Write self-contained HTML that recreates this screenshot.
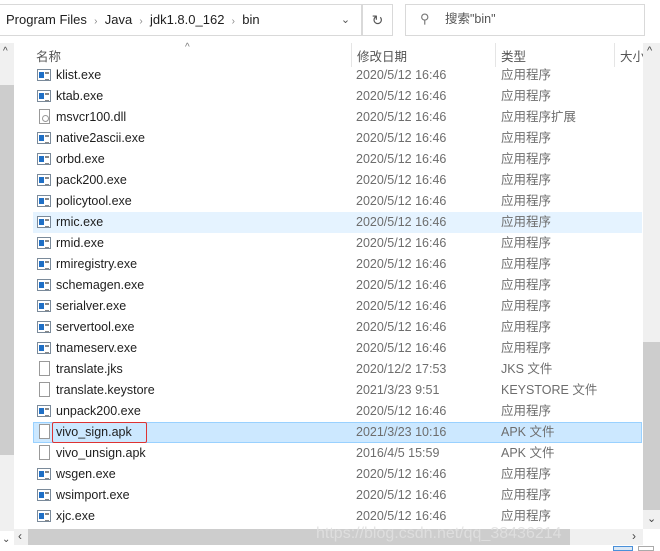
<!DOCTYPE html>
<html><head><meta charset="utf-8"><style>
*{margin:0;padding:0;box-sizing:border-box}
body{width:660px;height:551px;background:#fff;position:relative;overflow:hidden;font-family:"Liberation Sans","Noto Sans CJK SC",sans-serif;font-size:12.5px;line-height:15px;color:#1e1e1e}
.a{position:absolute}
.row{position:absolute;left:33px;width:609px;height:21px}
.row span{position:absolute;top:3px;white-space:nowrap;line-height:15px;height:15px}
.n{left:23px}.d{left:323px;color:#6d6d6d}.t{left:468px;color:#6d6d6d}
.ic{position:absolute;left:4px;top:4px;width:14px;height:12px;border:1px solid #7a8a9a;background:#fff}
.ic:before{content:"";position:absolute;left:1px;top:2px;width:5px;height:6px;background:#1f6fc5}
.ic:after{content:"";position:absolute;left:7px;top:2px;width:4px;height:6px;border-top:1px solid #888;border-bottom:1px solid #888;box-shadow:inset 0 2px 0 -1px #888}
.fi{position:absolute;left:6px;top:2px;width:11px;height:15px;border:1px solid #999;background:#fff}
.dll{position:absolute;left:6px;top:2px;width:11px;height:15px;border:1px solid #999;background:#fff}
.dll:after{content:"";position:absolute;left:2px;top:5px;width:5px;height:5px;border:1px solid #999;border-radius:50%}
</style></head><body>
<div class="a" style="left:0;top:4px;width:362px;height:32px;border-top:1px solid #d9d9d9;border-bottom:1px solid #d9d9d9"></div>
<div class="a" style="left:6px;top:12px;font-size:13px">Program Files&nbsp;&nbsp;<span style="color:#888;font-size:10px">›</span>&nbsp;&nbsp;Java&nbsp;&nbsp;<span style="color:#888;font-size:10px">›</span>&nbsp;&nbsp;jdk1.8.0_162&nbsp;&nbsp;<span style="color:#888;font-size:10px">›</span>&nbsp;&nbsp;bin</div>
<div class="a" style="left:330px;top:4px;width:32px;height:32px;border:1px solid #d9d9d9;border-left:none;text-align:center;line-height:30px;color:#555;font-size:11px">⌄</div>
<div class="a" style="left:362px;top:4px;width:31px;height:32px;border:1px solid #d9d9d9;text-align:center;line-height:30px;color:#555;font-size:14px">↻</div>
<div class="a" style="left:405px;top:4px;width:240px;height:32px;border:1px solid #d9d9d9"></div>
<div class="a" style="left:420px;top:11px;color:#777;font-size:13px">⚲</div>
<div class="a" style="left:445px;top:12px;color:#555;font-size:12.5px">搜索"bin"</div>
<div class="a" style="left:0;top:43px;width:14px;height:488px;background:#f0f0f0"></div>
<div class="a" style="left:3px;top:44px;font-size:10px;color:#444">^</div>
<div class="a" style="left:0;top:85px;width:14px;height:370px;background:#cdcdcd"></div>
<div class="a" style="left:2px;top:532px;font-size:10px;color:#444">⌄</div>
<div class="a" style="left:185px;top:40px;font-size:10px;color:#777">^</div>
<div class="a" style="left:36px;top:50px;color:#555">名称</div>
<div class="a" style="left:351px;top:43px;width:1px;height:24px;background:#e5e5e5"></div>
<div class="a" style="left:357px;top:50px;color:#555">修改日期</div>
<div class="a" style="left:495px;top:43px;width:1px;height:24px;background:#e5e5e5"></div>
<div class="a" style="left:501px;top:50px;color:#555">类型</div>
<div class="a" style="left:614px;top:43px;width:1px;height:24px;background:#e5e5e5"></div>
<div class="a" style="left:620px;top:50px;color:#555">大小</div>
<div class="a" style="left:643px;top:43px;width:17px;height:486px;background:#f0f0f0"></div>
<div class="a" style="left:647px;top:44px;font-size:11px;color:#444">^</div>
<div class="a" style="left:643px;top:342px;width:17px;height:168px;background:#cdcdcd"></div>
<div class="a" style="left:647px;top:512px;font-size:11px;color:#444">⌄</div>
<div class="a" style="left:33px;top:212px;width:609px;height:21px;background:#e5f3ff"></div>
<div class="a" style="left:33px;top:422px;width:609px;height:21px;background:#cce8ff;border:1px solid #99d1ff"></div>
<div class="a" style="left:52px;top:422px;width:95px;height:21px;border:1px solid #d33;border-radius:2px"></div>
<div class="row" style="top:65px"><i class="ic"></i><span class="n">klist.exe</span><span class="d">2020/5/12 16:46</span><span class="t">应用程序</span></div>
<div class="row" style="top:86px"><i class="ic"></i><span class="n">ktab.exe</span><span class="d">2020/5/12 16:46</span><span class="t">应用程序</span></div>
<div class="row" style="top:107px"><i class="dll"></i><span class="n">msvcr100.dll</span><span class="d">2020/5/12 16:46</span><span class="t">应用程序扩展</span></div>
<div class="row" style="top:128px"><i class="ic"></i><span class="n">native2ascii.exe</span><span class="d">2020/5/12 16:46</span><span class="t">应用程序</span></div>
<div class="row" style="top:149px"><i class="ic"></i><span class="n">orbd.exe</span><span class="d">2020/5/12 16:46</span><span class="t">应用程序</span></div>
<div class="row" style="top:170px"><i class="ic"></i><span class="n">pack200.exe</span><span class="d">2020/5/12 16:46</span><span class="t">应用程序</span></div>
<div class="row" style="top:191px"><i class="ic"></i><span class="n">policytool.exe</span><span class="d">2020/5/12 16:46</span><span class="t">应用程序</span></div>
<div class="row" style="top:212px"><i class="ic"></i><span class="n">rmic.exe</span><span class="d">2020/5/12 16:46</span><span class="t">应用程序</span></div>
<div class="row" style="top:233px"><i class="ic"></i><span class="n">rmid.exe</span><span class="d">2020/5/12 16:46</span><span class="t">应用程序</span></div>
<div class="row" style="top:254px"><i class="ic"></i><span class="n">rmiregistry.exe</span><span class="d">2020/5/12 16:46</span><span class="t">应用程序</span></div>
<div class="row" style="top:275px"><i class="ic"></i><span class="n">schemagen.exe</span><span class="d">2020/5/12 16:46</span><span class="t">应用程序</span></div>
<div class="row" style="top:296px"><i class="ic"></i><span class="n">serialver.exe</span><span class="d">2020/5/12 16:46</span><span class="t">应用程序</span></div>
<div class="row" style="top:317px"><i class="ic"></i><span class="n">servertool.exe</span><span class="d">2020/5/12 16:46</span><span class="t">应用程序</span></div>
<div class="row" style="top:338px"><i class="ic"></i><span class="n">tnameserv.exe</span><span class="d">2020/5/12 16:46</span><span class="t">应用程序</span></div>
<div class="row" style="top:359px"><i class="fi"></i><span class="n">translate.jks</span><span class="d">2020/12/2 17:53</span><span class="t">JKS 文件</span></div>
<div class="row" style="top:380px"><i class="fi"></i><span class="n">translate.keystore</span><span class="d">2021/3/23 9:51</span><span class="t">KEYSTORE 文件</span></div>
<div class="row" style="top:401px"><i class="ic"></i><span class="n">unpack200.exe</span><span class="d">2020/5/12 16:46</span><span class="t">应用程序</span></div>
<div class="row" style="top:422px"><i class="fi"></i><span class="n">vivo_sign.apk</span><span class="d">2021/3/23 10:16</span><span class="t">APK 文件</span></div>
<div class="row" style="top:443px"><i class="fi"></i><span class="n">vivo_unsign.apk</span><span class="d">2016/4/5 15:59</span><span class="t">APK 文件</span></div>
<div class="row" style="top:464px"><i class="ic"></i><span class="n">wsgen.exe</span><span class="d">2020/5/12 16:46</span><span class="t">应用程序</span></div>
<div class="row" style="top:485px"><i class="ic"></i><span class="n">wsimport.exe</span><span class="d">2020/5/12 16:46</span><span class="t">应用程序</span></div>
<div class="row" style="top:506px"><i class="ic"></i><span class="n">xjc.exe</span><span class="d">2020/5/12 16:46</span><span class="t">应用程序</span></div>
<div class="a" style="left:14px;top:529px;width:629px;height:16px;background:#f0f0f0"></div>
<div class="a" style="left:28px;top:529px;width:542px;height:16px;background:#cdcdcd"></div>
<div class="a" style="left:18px;top:529px;font-size:12px;color:#444">‹</div>
<div class="a" style="left:632px;top:529px;font-size:12px;color:#444">›</div>
<div class="a" style="left:316px;top:525px;font-size:16px;line-height:18px;color:rgba(225,225,225,0.85)">https://blog.csdn.net/qq_38436214</div>
<div class="a" style="left:613px;top:546px;width:20px;height:5px;border:1px solid #4a90d9;background:#dbe8f5"></div>
<div class="a" style="left:638px;top:546px;width:16px;height:5px;border:1px solid #aaa"></div>
</body></html>
